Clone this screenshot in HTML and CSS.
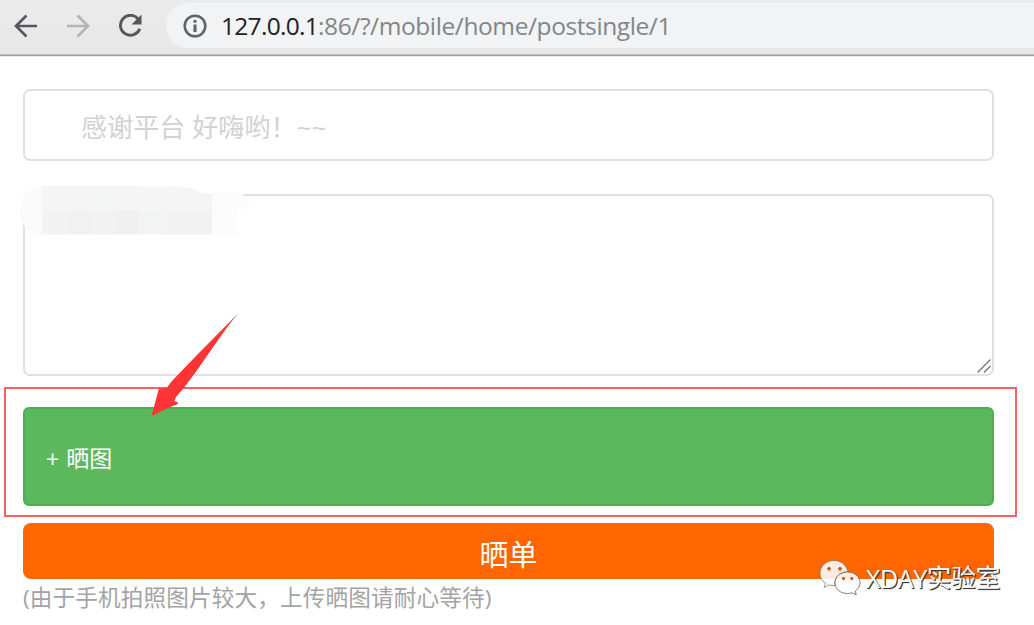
FILE: index.html
```html
<!DOCTYPE html>
<html lang="zh-CN">
<head>
<meta charset="utf-8">
<title>晒单</title>
<link rel="stylesheet" href="styles.css">
</head>
<body>
<header class="toolbar">
  <svg class="nav-icon" viewBox="0 0 24 24"><path d="M23 12H2.500M12.500 1.500L2 12l10.500 10.500" fill="none" stroke="#54585d" stroke-width="2.700"/></svg>
  <svg class="nav-icon" viewBox="0 0 24 24"><path d="M1 12h20.500M11.500 1.500L22 12 11.500 22.500" fill="none" stroke="#b3b4b5" stroke-width="2.700"/></svg>
  <svg class="nav-icon" viewBox="0 0 24 24"><path d="M20.300 5.100A10 10 0 1 0 21.800 14.800" fill="none" stroke="#54585d" stroke-width="2.900"/><path d="M23.500 0.500v10h-10z" fill="#54585d"/></svg>
  <div class="address">
    <svg class="info-icon" viewBox="0 0 24 24"><circle cx="12" cy="12" r="10.300" fill="none" stroke="#5f6368" stroke-width="2.500"/><path d="M10.500 10.500h3v7.500h-3zM10.500 6h3v2.700h-3z" fill="#5f6368"/></svg>
    <span class="url"><span class="host">127.0.0.1</span><span class="path">:86/?/mobile/home/postsingle/1</span></span>
  </div>
</header>
<main class="page">
  <div class="field title-field"><span class="placeholder">感谢平台 好嗨哟！~~</span></div>
  <div class="field text-field">
    <svg class="grip" viewBox="0 0 16 16"><path d="M1.500 14.500l13-13M8 14.500L14.500 8" stroke="#747474" stroke-width="1.300" fill="none"/></svg>
  </div>
  <div class="upload"><span class="plus">+</span><span class="upload-text">晒图</span></div>
  <div class="submit"><span class="submit-text">晒单</span></div>
  <p class="note">(由于手机拍照图片较大，上传晒图请耐心等待)</p>
</main>
<svg class="mosaic" viewBox="0 0 234 54">
  <path d="M22 2H123V3H168L183 9H210V51H22Q0 48 0 27Q1 5 22 2Z" fill="#fafafa"/>
  <path d="M210 9H220Q229 13 230 25H217V51H190V9Z" fill="#fcfcfc"/>
  <path d="M22 2H123V3H149V2H158L168 4L183 9H192V26H22Z" fill="#f5f5f5"/>
  <path d="M22 26H192V50H22Z" fill="#f2f2f2"/>
  <path d="M70 2H96V26H70Z" fill="#f4f5f5"/>
  <path d="M49 26H70V50H49Z" fill="#f2f1ef"/>
  <path d="M96 26H119V50H96Z" fill="#f0f0f0"/>
  <path d="M119 26H143V50H119Z" fill="#f2f4f4"/>
</svg>
<div class="highlight"></div>
<svg class="arrow" viewBox="0 0 90 106"><path d="M88.500 2L48 43L22 70L17.500 76.500L15 75.500L13.500 77L10 76L2.500 104L20 95.500L29 92L28.500 90L25.500 89L27 85L33.500 77.500C52 55 68 27 88.500 2Z" fill="#ff3535"/></svg>
<div class="watermark">
  <svg class="wechat" viewBox="0 0 42 37">
    <path d="M15 1.500C7 1.500 1 7 1 14.500c0 4 2 7.500 5.500 9.800L5 28.500l5.300-2.600c2 .6 3.500.8 5.500.7C15 19 20 13 29 12.800 27.500 6 22 1.500 15 1.500Z" fill="#fff" fill-opacity=".88" stroke="#76685f" stroke-width=".7"/>
    <path d="M28.500 13C21.500 13 16 17.500 16 23.800s5.500 10.700 12.500 10.700c1.700 0 3-.2 4.500-.7l4.200 2-.9-3.800c2.900-2 4.700-4.700 4.700-8.200C41 17.500 35.500 13 28.500 13Z" fill="#fff" fill-opacity=".88" stroke="#665c56" stroke-width=".8"/>
    <g fill="#d7651f"><circle cx="10" cy="10" r="1.800"/><circle cx="21" cy="10" r="1.800"/><circle cx="24.500" cy="19.800" r="1.500"/><circle cx="32.800" cy="19.800" r="1.500"/></g>
    <path d="M8.300 9.500q1.700-2 3.400 0M19.300 9.500q1.700-2 3.400 0M23 19.400q1.500-1.800 3 0M31.300 19.400q1.500-1.800 3 0" stroke="#57453c" stroke-width=".8" fill="none"/>
  </svg>
  <span class="brand"><span class="brand-latin">XDAY</span><span class="brand-cjk">实验室</span></span>
</div>
</body>
</html>
```
FILE: styles.css
```css
* { box-sizing: border-box; }
body {
  margin: 0;
  width: 1034px;
  height: 625px;
  overflow: hidden;
  background: #fff;
  position: relative;
  font-family: "Open Sans", "Noto Sans CJK SC", sans-serif;
}
.toolbar {
  display: flex;
  align-items: center;
  height: 57px;
  padding: 0 0 5px 14px;
  gap: 28px;
  background: linear-gradient(#ebebeb, #e7e7e7 54px, #c0c0c0 54px, #c0c0c0 55px, #a0a0a0 55px, #a0a0a0 56px, #ececec 56px);
}
.nav-icon { width: 24px; height: 24px; flex: none; }
.address {
  display: flex;
  align-items: center;
  flex: 1;
  height: 45px;
  margin-left: -4px;
  margin-top: -1px;
  padding-left: 17px;
  gap: 14px;
  border-radius: 23px 0 0 23px;
  background: #f1f3f4;
}
.info-icon { width: 24px; height: 24px; flex: none; }
.url { font-size: 24.5px; line-height: 34px; white-space: nowrap; }
.host { color: #202124; letter-spacing: -0.7px; }
.path { color: #80868b; letter-spacing: -0.4px; }
.page { padding: 32px 40px 0 23px; display: flex; flex-direction: column; }
.field { border: 2px solid #e1e1e1; border-radius: 7px; }
.title-field { height: 72px; padding: 3px 0 0 56px; display: flex; align-items: center; }
.placeholder { color: #d2d2d2; font-size: 26px; line-height: 36px; white-space: nowrap; letter-spacing: 0.1px; }
.text-field { height: 182px; margin-top: 33px; display: flex; align-items: flex-end; justify-content: flex-end; }
.grip { width: 16px; height: 16px; }
.upload {
  height: 99px;
  margin-top: 31px;
  padding: 2px 0 0 21px;
  display: flex;
  align-items: center;
  gap: 7px;
  background: #5cb85c;
  border: 2px solid #4cae4c;
  border-radius: 6px;
  color: #fff;
  font-size: 23px;
}
.plus { padding-top: 2px; }
.upload-text { padding-bottom: 2px; }
.submit {
  height: 56px;
  margin-top: 17px;
  padding-top: 8px;
  display: flex;
  align-items: center;
  justify-content: center;
  background: #f60;
  border-radius: 8px;
  color: #fff;
  font-size: 29px;
  line-height: 40px;
}
.note { margin: 3px 0 0; font-size: 22.6px; line-height: 32px; color: #a3a3a3; white-space: nowrap; letter-spacing: 0.15px; }
.mosaic { position: absolute; left: 20px; top: 184px; width: 234px; height: 54px; }
.highlight { position: absolute; left: 4px; top: 387px; width: 1013px; height: 130px; border: 2px solid #fb6262; }
.arrow { position: absolute; left: 149px; top: 312px; width: 90px; height: 106px; }
.watermark { position: absolute; left: 819px; top: 559px; display: flex; align-items: center; gap: 5px; }
.wechat { width: 42px; height: 37px; }
.brand { display: flex; align-items: center; color: #fff; line-height: 36px; text-shadow: 1px 1px 1px #333, 1px 1px 0 #555; white-space: nowrap; }
.brand-latin { font-size: 25px; letter-spacing: -0.4px; }
.brand-cjk { font-size: 24.5px; }
```
